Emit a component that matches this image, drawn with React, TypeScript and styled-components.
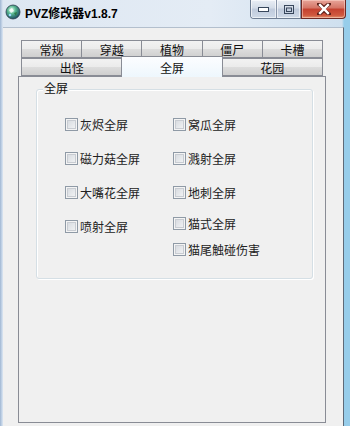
import * as React from 'react';
import styled, { createGlobalStyle } from 'styled-components';

const GlobalStyle = createGlobalStyle`
  html, body {
    margin: 0;
    padding: 0;
    background: #97cdea;
  }
  * {
    box-sizing: border-box;
  }
`;

const FONT = `"Liberation Sans", "Noto Sans CJK SC", sans-serif`;

const Window = styled.div`
  width: 350px;
  height: 426px;
  display: flex;
  flex-direction: column;
  overflow: hidden;
  font-family: ${FONT};
  background: linear-gradient(
    to right,
    #9fb6d2 0,
    #c9d8ea 2px,
    #dde7f2 3px,
    #e4ecf5 60%,
    #cfe0ef calc(100% - 8px),
    #97cdea calc(100% - 6px)
  );
`;

const TitleBar = styled.div`
  height: 27px;
  flex: none;
  display: flex;
  align-items: flex-start;
  padding-left: 5px;
`;

const TitleText = styled.div`
  display: flex;
  align-items: center;
  gap: 4px;
  height: 24px;
  font-size: 12px;
  font-weight: bold;
  color: #000;
  flex: 1;
`;

const WinButtons = styled.div`
  display: flex;
  margin-right: 4px;
`;

const CapGroup = styled.div`
  display: flex;
  height: 19px;
  border: 1px solid #6f7e93;
  border-top: none;
  border-right: none;
  border-radius: 0 0 0 4px;
  overflow: hidden;
`;

const CapButton = styled.div<{ $w: number }>`
  width: ${(p) => p.$w}px;
  height: 100%;
  display: flex;
  align-items: center;
  justify-content: center;
  background: linear-gradient(to bottom, #e9eef5 0%, #d3dce8 45%, #bfcadb 50%, #cfdae8 100%);
  border-right: 1px solid #8794a8;
  box-shadow: inset 0 0 0 1px rgba(255, 255, 255, 0.6);
`;

const CloseButton = styled.div`
  width: 45px;
  height: 19px;
  display: flex;
  align-items: center;
  justify-content: center;
  border: 1px solid #6e2a25;
  border-top: none;
  border-radius: 0 0 4px 0;
  background: linear-gradient(to bottom, #e8a59a 0%, #d47465 45%, #c4402f 50%, #d0593f 85%, #e0956f 100%);
  box-shadow: inset 0 0 0 1px rgba(255, 220, 210, 0.5);
`;

const Client = styled.div`
  flex: 1;
  margin-left: 3px;
  margin-right: 6px;
  background: #f0f0f0;
  border-top: 1px solid #b3bfcd;
  border-right: 1px solid #5e6a78;
  padding: 12px 0 0 15px;
`;

const TabControl = styled.div`
  width: 308px;
  display: flex;
  flex-direction: column;
`;

const TabRow = styled.div`
  display: flex;
  height: 18px;
  margin: 0 3px;
  position: relative;
`;

const Tab = styled.div<{ $active?: boolean }>`
  flex: 1;
  display: flex;
  align-items: center;
  justify-content: center;
  font-size: 12px;
  color: #111;
  border: 1px solid #898c95;
  margin-right: -1px;
  background: ${(p) =>
    p.$active
      ? 'linear-gradient(to bottom, #fcfdff, #eef7fd)'
      : 'linear-gradient(to bottom, #f2f2f2 0%, #ebebeb 50%, #dddddd 51%, #cfcfcf 100%)'};
  ${(p) =>
    p.$active &&
    `
    margin-top: -2px;
    height: 21px;
    border-bottom: none;
    position: relative;
    z-index: 2;
  `}
  &:last-child {
    margin-right: 0;
  }
`;

const Panel = styled.div`
  height: 347px;
  border: 1px solid #898c95;
  background: #f0f0f0;
  padding: 12px 0 0 17px;
`;

const Group = styled.div`
  position: relative;
  width: 277px;
  height: 190px;
  border: 1px solid #d5dfe5;
  border-radius: 3px;
  box-shadow: inset 1px 1px 0 #fff, 1px 1px 0 #fff;
  padding: 17px 0 0 28px;
`;

const GroupLabel = styled.span`
  position: absolute;
  top: -8px;
  left: 6px;
  padding: 0 1px;
  background: #f0f0f0;
  font-size: 12px;
  line-height: 14px;
  color: #111;
`;

const Columns = styled.div`
  display: grid;
  grid-template-columns: 108px auto;
`;

const Column = styled.div`
  display: flex;
  flex-direction: column;
`;

const Option = styled.label<{ $h?: number }>`
  display: flex;
  align-items: center;
  gap: 2px;
  height: ${(p) => p.$h ?? 34}px;
  font-size: 12px;
  color: #222;
  white-space: nowrap;
`;

const Box = styled.span`
  width: 13px;
  height: 13px;
  flex: none;
  border: 1px solid #8f9aa6;
  box-shadow: inset 0 0 0 1px #f4f4f4, inset 0 0 0 2px #c8ccd2;
  background-image: linear-gradient(135deg, #d2d6dc, #f6f7f8);
`;

function AppIcon() {
  return (
    <svg width="16" height="16" viewBox="0 0 16 16">
      <defs>
        <radialGradient id="g" cx="40%" cy="35%" r="65%">
          <stop offset="0%" stopColor="#e6fff4" />
          <stop offset="45%" stopColor="#56b48e" />
          <stop offset="100%" stopColor="#1d4f63" />
        </radialGradient>
      </defs>
      <circle cx="8" cy="8" r="7" fill="url(#g)" stroke="#2c3f4f" strokeWidth="0.8" />
      <path d="M4 6 L7 4 L9 7 L6 9 Z" fill="#fff" opacity="0.8" />
      <path d="M9 9 L12 8 L11 12 Z" fill="#2e7a4a" />
      <circle cx="5" cy="11" r="1.3" fill="#9ad9ff" />
    </svg>
  );
}

const App: React.FC = () => {
  const left = ['灰烬全屏', '磁力菇全屏', '大嘴花全屏', '喷射全屏'];
  const right = ['窝瓜全屏', '溅射全屏', '地刺全屏', '猫式全屏'];
  return (
    <>
      <GlobalStyle />
      <Window>
        <TitleBar>
          <TitleText>
            <AppIcon />
            PVZ修改器v1.8.7
          </TitleText>
          <WinButtons>
            <CapGroup>
              <CapButton $w={26}>
                <svg width="11" height="5" viewBox="0 0 11 5">
                  <rect x="0.5" y="0.5" width="10" height="4" fill="#fff" stroke="#38475c" />
                </svg>
              </CapButton>
              <CapButton $w={24}>
                <svg width="10" height="9" viewBox="0 0 10 9">
                  <rect x="0.5" y="0.5" width="9" height="8" fill="none" stroke="#38475c" />
                  <rect x="2.5" y="3" width="5" height="3.5" fill="none" stroke="#38475c" />
                </svg>
              </CapButton>
            </CapGroup>
            <CloseButton>
              <svg width="14" height="12" viewBox="0 0 14 12">
                <path
                  d="M2 1 L7 5 L12 1 M2 11 L7 7 L12 11"
                  stroke="#5b1e17"
                  strokeWidth="4"
                  fill="none"
                  strokeLinecap="round"
                />
                <path
                  d="M2.2 1.2 L11.8 10.8 M11.8 1.2 L2.2 10.8"
                  stroke="#fff"
                  strokeWidth="2.4"
                  fill="none"
                />
              </svg>
            </CloseButton>
          </WinButtons>
        </TitleBar>
        <Client>
          <TabControl>
            <TabRow>
              <Tab>常规</Tab>
              <Tab>穿越</Tab>
              <Tab>植物</Tab>
              <Tab>僵尸</Tab>
              <Tab>卡槽</Tab>
            </TabRow>
            <TabRow>
              <Tab>出怪</Tab>
              <Tab $active>全屏</Tab>
              <Tab>花园</Tab>
            </TabRow>
            <Panel>
              <Group>
                <GroupLabel>全屏</GroupLabel>
                <Columns>
                  <Column>
                    {left.map((t) => (
                      <Option key={t}>
                        <Box />
                        {t}
                      </Option>
                    ))}
                  </Column>
                  <Column>
                    {right.map((t, i) => (
                      <Option key={t} $h={i === right.length - 1 ? 29 : 34}>
                        <Box />
                        {t}
                      </Option>
                    ))}
                    <Option $h={22}>
                      <Box />
                      猫尾触碰伤害
                    </Option>
                  </Column>
                </Columns>
              </Group>
            </Panel>
          </TabControl>
        </Client>
      </Window>
    </>
  );
};

export default App;
